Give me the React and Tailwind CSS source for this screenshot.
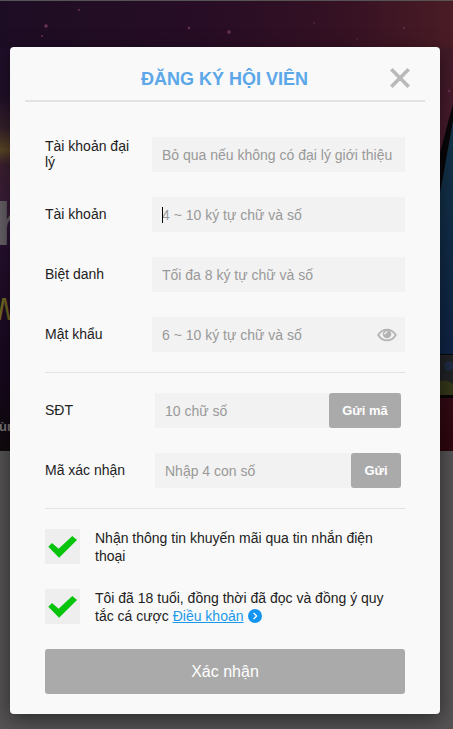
import React, { useState } from 'react';

const accountFields = [
  { name: 'agent', label: 'Tài khoản đại lý', placeholder: 'Bỏ qua nếu không có đại lý giới thiệu' },
  { name: 'account', label: 'Tài khoản', placeholder: '4 ~ 10 ký tự chữ và số', caret: true },
  { name: 'nickname', label: 'Biệt danh', placeholder: 'Tối đa 8 ký tự chữ và số' },
  { name: 'password', label: 'Mật khẩu', placeholder: '6 ~ 10 ký tự chữ và số', eye: true },
];

const phoneFields = [
  { name: 'phone', label: 'SĐT', placeholder: '10 chữ số', button: 'Gửi mã', width: 'w-[72px]' },
  { name: 'code', label: 'Mã xác nhận', placeholder: 'Nhập 4 con số', button: 'Gửi', width: 'w-[50px]' },
];

// Dimmed landing page behind the dialog
const Backdrop = () => (
  <svg className="absolute inset-0" width="453" height="729" viewBox="0 0 453 729">
    <defs>
      <linearGradient id="sky" x1="0" x2="1">
        <stop offset="0" stopColor="#1d0d24" />
        <stop offset="0.45" stopColor="#270d25" />
        <stop offset="0.75" stopColor="#351123" />
        <stop offset="1" stopColor="#4a1c25" />
      </linearGradient>
      <linearGradient id="left" x1="0" x2="0" y1="0" y2="1">
        <stop offset="0" stopColor="#200e2a" />
        <stop offset="0.12" stopColor="#22102a" />
        <stop offset="0.2" stopColor="#36202b" />
        <stop offset="0.255" stopColor="#5c4626" />
        <stop offset="0.29" stopColor="#3c2030" />
        <stop offset="0.42" stopColor="#3a1b3e" />
        <stop offset="0.5" stopColor="#260f2e" />
        <stop offset="0.8" stopColor="#180820" />
        <stop offset="1" stopColor="#100a0e" />
      </linearGradient>
      <linearGradient id="right" x1="0" x2="0" y1="0" y2="1">
        <stop offset="0" stopColor="#421a28" />
        <stop offset="0.4" stopColor="#4c1b30" />
        <stop offset="1" stopColor="#2c050d" />
      </linearGradient>
      <linearGradient id="screen" x1="0" x2="0" y1="0" y2="1">
        <stop offset="0" stopColor="#14354a" />
        <stop offset="1" stopColor="#0e2344" />
      </linearGradient>
    </defs>
    <rect width="453" height="729" fill="#555354" />
    <rect y="1" width="453" height="450" fill="url(#sky)" />
    <rect y="47" width="12" height="404" fill="url(#left)" />
    <rect x="438" y="47" width="15" height="404" fill="url(#right)" />
    <path d="M453 104L438 160V357H453Z" fill="#080608" />
    <path d="M453 121L438 204V354H453Z" fill="url(#screen)" />
    <rect x="438" y="355" width="15" height="40" fill="#202225" />
    <circle cx="449" cy="366" r="5" fill="#202b43" />
    <path d="M438 382Q446 378 453 384V395H438Z" fill="#343719" />
    <rect x="438" y="395" width="15" height="3" fill="#080506" />
    <g fill="#6a3156">
      <circle cx="46" cy="26" r="1.8" />
      <circle cx="42" cy="36" r="1" />
      <circle cx="79" cy="10" r="1" />
      <circle cx="189" cy="28" r="1.2" />
      <circle cx="229" cy="32" r="1.7" />
      <circle cx="314" cy="23" r="0.8" />
      <circle cx="357" cy="39" r="0.8" />
      <circle cx="404" cy="28" r="1" />
      <circle cx="449" cy="91" r="1.3" />
    </g>
    <g fontFamily="Liberation Sans, Arial, sans-serif">
      <text x="-6" y="245" fontSize="62" fontWeight="bold" fill="#666066">h</text>
      <text x="-3" y="320" fontSize="32" fontStyle="italic" fill="#746821">M</text>
      <text x="-1" y="431" fontSize="13" fontWeight="bold" fill="#7b767b">ùn</text>
    </g>
  </svg>
);

const EyeIcon = () => (
  <svg width="20" height="14" viewBox="0 0 20 14" className="shrink-0">
    <path d="M1.2 7Q4.6 1.6 10 1.6T18.8 7Q15.4 12.4 10 12.4T1.2 7Z" fill="none" stroke="#b4b4b4" strokeWidth="1.9" strokeLinejoin="round" />
    <circle cx="10" cy="6" r="4.3" fill="#b4b4b4" />
    <path d="M7.8 5.9Q7.9 4 10 3.8" fill="none" stroke="#f2f2f2" strokeWidth="1.3" strokeLinecap="round" />
  </svg>
);

const Checkbox = ({ checked, onChange }) => (
  <button type="button" onClick={onChange} className="h-[35px] w-[35px] shrink-0 bg-[#eeeeee]">
    {checked && (
      <svg width="35" height="35" viewBox="0 0 35 35">
        <path d="M3.3 17.8L7 14.1L13.6 19.8L27.3 7L32 11.1L14.1 28.8Z" fill="#06c30c" />
      </svg>
    )}
  </button>
);

const App = () => {
  const [formData, setFormData] = useState({
    agent: '',
    account: '',
    nickname: '',
    password: '',
    phone: '',
    code: '',
  });
  const [news, setNews] = useState(true);
  const [terms, setTerms] = useState(true);

  const handleChange = (e) => {
    const { name, value } = e.target;
    setFormData({ ...formData, [name]: value });
  };

  return (
    <div className="relative h-[729px] w-[453px] overflow-hidden px-[10px] pt-[47px] font-['Liberation_Sans',Arial,sans-serif] text-sm text-[#222222]">
      <Backdrop />
      <form
        onSubmit={(e) => e.preventDefault()}
        className="relative h-[667px] w-[430px] rounded-[4px] bg-[#f9f9f9] px-[15px] shadow-[0_5px_20px_rgba(0,0,0,0.5)]"
      >
        <div className="flex h-[55px] items-center border-b-2 border-[#e3e3e3] pt-[9px]">
          <h1 className="flex-1 pt-[2px] pl-[34px] text-center text-[18px] leading-5 font-bold text-[#5ba7e8]">ĐĂNG KÝ HỘI VIÊN</h1>
          <button type="button" className="mr-[15px] flex w-5 shrink-0 justify-center">
            <svg width="20" height="20" viewBox="0 0 20 20">
              <path d="M1.3 1.3L18.7 18.7M18.7 1.3L1.3 18.7" stroke="#b9b9b9" strokeWidth="3.6" />
            </svg>
          </button>
        </div>

        <div className="px-5">
          <div className="flex flex-col gap-[25px] border-b border-[#e3e3e3] pt-[35px] pb-5">
            {accountFields.map((field) => (
              <div key={field.name} className="flex h-[35px] items-center">
                <label className="w-[107px] shrink-0 pr-5 pb-px leading-4">{field.label}</label>
                <div className="relative flex h-[35px] flex-1 items-center bg-[#f2f2f2] pr-2 pl-[10px]">
                  {field.caret && <span className="absolute top-[10px] left-[10px] h-4 w-px bg-black" />}
                  <input
                    name={field.name}
                    value={formData[field.name]}
                    onChange={handleChange}
                    placeholder={field.placeholder}
                    className="h-[35px] w-full min-w-0 bg-transparent pt-px outline-none placeholder:text-[#999999]"
                  />
                  {field.eye && <EyeIcon />}
                </div>
              </div>
            ))}
          </div>

          <div className="flex flex-col gap-[25px] border-b border-[#e3e3e3] pt-5 pr-1 pb-5">
            {phoneFields.map((field) => (
              <div key={field.name} className="flex h-[35px] items-center">
                <label className="w-[110px] shrink-0 pb-px leading-4">{field.label}</label>
                <div className="flex h-[35px] flex-1 bg-[#f2f2f2] pl-[10px]">
                  <input
                    name={field.name}
                    value={formData[field.name]}
                    onChange={handleChange}
                    placeholder={field.placeholder}
                    className="h-[35px] w-full min-w-0 bg-transparent pt-px outline-none placeholder:text-[#999999]"
                  />
                  <button type="button" className={`${field.width} shrink-0 rounded-[3px] bg-[#aaaaaa] pt-[2px] text-[13px] font-bold text-white`}>
                    {field.button}
                  </button>
                </div>
              </div>
            ))}
          </div>

          <div className="flex flex-col gap-[25px] pt-5 leading-[18px]">
            <div className="flex h-[35px] gap-[15px]">
              <Checkbox checked={news} onChange={() => setNews(!news)} />
              <p>
                Nhận thông tin khuyến mãi qua tin nhắn điện
                <br />
                thoại
              </p>
            </div>
            <div className="flex h-[35px] gap-[15px]">
              <Checkbox checked={terms} onChange={() => setTerms(!terms)} />
              <p>
                Tôi đã 18 tuổi, đồng thời đã đọc và đồng ý quy
                <br />
                tắc cá cược <a className="text-[#1b9ae9] underline">Điều khoản</a>
                <svg width="14" height="14" viewBox="0 0 14 14" className="ml-1 inline-block align-[-2px]">
                  <circle cx="7" cy="7" r="7" fill="#1495f2" />
                  <path d="M5.6 4L8.6 7L5.6 10" fill="none" stroke="#ffffff" strokeWidth="1.3" />
                </svg>
              </p>
            </div>
          </div>

          <button type="submit" className="mt-[25px] h-[45px] w-full rounded-[3px] bg-[#aaaaaa] text-base text-white">
            Xác nhận
          </button>
        </div>
      </form>
    </div>
  );
};

export default App;
